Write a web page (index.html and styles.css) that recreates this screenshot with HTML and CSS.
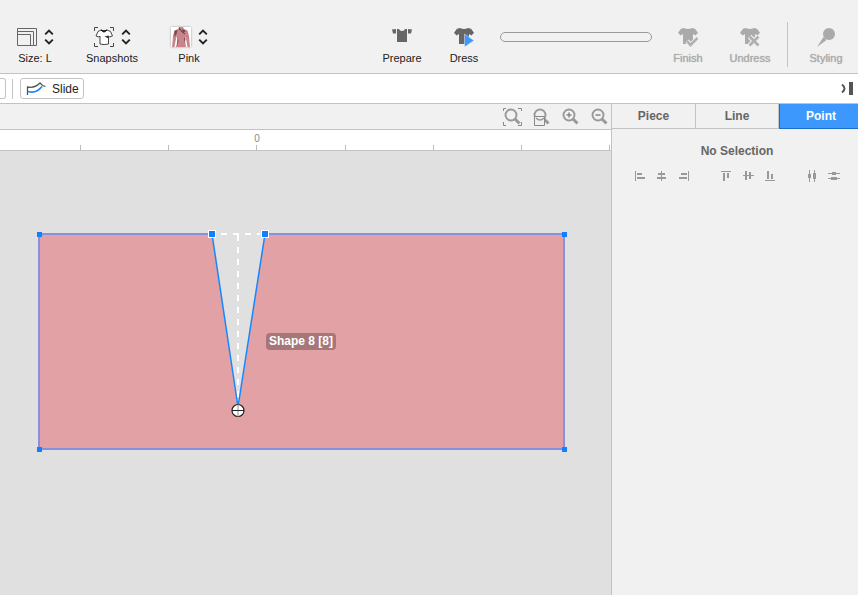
FILE: index.html
```html
<!DOCTYPE html>
<html lang="en">
<head>
<meta charset="utf-8">
<title>Pattern editor</title>
<link rel="stylesheet" href="styles.css">
</head>
<body>
<svg class="defs" aria-hidden="true">
  <symbol id="chevrons" viewBox="0 0 10 16"><path d="M1.200 5.300L5 1.500l3.800 3.800M1.200 10.700L5 14.500l3.800-3.800" fill="none" stroke="#222" stroke-width="1.900"/></symbol>
  <symbol id="tee" viewBox="0 0 20 20"><path d="M6 1q4 2 8 0l3 .8 3 4L17.500 8.500 15 7v10H5V7L2.500 8.500 0 5.800l3-4z" fill="currentColor"/></symbol>
  <symbol id="lens" viewBox="0 0 20 20"><circle cx="9" cy="8" r="5.500" fill="none" stroke="#999" stroke-width="1.900"/><path d="M13 12l4.500 4.500" stroke="#999" stroke-width="3"/></symbol>
</svg>
<header class="topbar">
  <div class="group presets">
    <button class="tool">
      <span class="icons">
        <svg width="20" height="20"><path d="M.5 1.500h19v17H.5zM.5 4.500h16v14M.5 7.500h13v11" fill="none" stroke="#666"/></svg>
        <svg width="10" height="16"><use href="#chevrons"/></svg>
      </span>Size: L
    </button>
    <button class="tool">
      <span class="icons">
        <svg width="20" height="20"><path d="M.5 4V.5H4M16 .5h3.500V4M19.500 16v3.500H16M4 19.500H.5V16" fill="none" stroke="#444"/><path d="M7 3L4 4.500 2 9l3 1 1-1v8q4 1.200 8.500 0V9l1 1 3-1-2-4.500L13 3Q10 5 7 3z" fill="#fff" stroke="#444"/><path d="M7 3q3 4 6 0l-3 1z" fill="#222" stroke="#222"/><path d="M10.500 9.500l4-1v3z" fill="#333"/></svg>
        <svg width="10" height="16"><use href="#chevrons"/></svg>
      </span>Snapshots
    </button>
    <button class="tool">
      <span class="icons">
        <svg class="thumb" width="20" height="20"><path d="M8 0h4l1 2 3.500 1.500L18 9l1 11h-2.500L14.500 9q-1 5 .5 11H5Q7 14 5.500 9L3.500 20H1L2 9l1.500-5.500L7 2z" fill="#ca858a"/><path d="M8 0v3l3 1M3.500 4l3-1-1 4-2 3zM6.500 14q1-3 0-5l1 5-2 6zM13 10l1.500 2-1 4zM11 2l4 2-3 2z" fill="#75464d"/><path d="M10 4l4 3" stroke="#623942"/></svg>
        <svg width="10" height="16"><use href="#chevrons"/></svg>
      </span>Pink
    </button>
  </div>
  <div class="group simulate">
    <button class="tool narrow">
      <span class="icons"><svg width="20" height="20"><path d="M5 2h2q.5 2 3 2t3-2h2v13H5zM0 2.500L4 2v4.500H1zM20 2.500L16 2v4.500h3z" fill="#666"/></svg></span>Prepare
    </button>
    <button class="tool narrow">
      <span class="icons dark"><svg width="20" height="20"><use href="#tee"/><path d="M10.500 7v13l9.500-6.500z" fill="#3c98fc" stroke="#f1f1f1" stroke-width=".5"/></svg></span>Dress
    </button>
  </div>
  <div class="progress" role="progressbar" aria-label="Simulation progress"></div>
  <div class="group finishing">
    <button class="tool narrow" disabled>
      <span class="icons"><svg width="20" height="20"><use href="#tee"/><path d="M9 14l3.500 4 7-7" fill="none" stroke="#f1f1f1" stroke-width="4.500"/><path d="M9 14l3.500 4 7-7" fill="none" stroke="#b0b0b0" stroke-width="2.600"/></svg></span>Finish
    </button>
    <button class="tool narrow" disabled>
      <span class="icons"><svg width="20" height="20"><use href="#tee"/><path d="M9.500 9.500l9 9m0-9l-9 9" stroke="#f1f1f1" stroke-width="5"/><path d="M9.500 9.500l9 9m0-9l-9 9" stroke="#b0b0b0" stroke-width="2.800"/></svg></span>Undress
    </button>
  </div>
  <div class="styling">
    <button class="tool narrow" disabled>
      <span class="icons"><svg width="20" height="20"><circle cx="13" cy="7" r="6" fill="currentColor"/><path d="M7.500 10l3 3L1 20z" fill="currentColor"/></svg></span>Styling
    </button>
  </div>
</header>
<nav class="optionbar">
  <button class="clipped" aria-label="Previous tool"></button>
  <span class="separator"></span>
  <button class="option"><svg width="21" height="16"><path d="M1.500 14V6q7 1.500 12.500-4l2.500 2.500 3 1" fill="none" stroke="#555" stroke-width="1.300"/><path d="M2 10.500q8 2.500 14-5" fill="none" stroke="#1686ff" stroke-width="1.700"/></svg>Slide</button>
  <button class="collapse" aria-label="Collapse panel"><svg width="12" height="13"><path d="M1 2.500q5 4 0 8" fill="none" stroke="#555" stroke-width="2"/><path d="M8 0h4v13H8z" fill="#555"/></svg></button>
</nav>
<main class="work">
  <section class="stage">
    <div class="zoombar">
      <button aria-label="Zoom to fit"><svg width="20" height="20"><use href="#lens"/><path d="M1.500 4V1.500H4M16 1.500h3.500V4M19.500 15v3.500H16M4 18.500H1.500V15" fill="none" stroke="#888"/></svg></button>
      <button aria-label="Zoom to area"><svg width="20" height="20"><use href="#lens"/><path d="M3.500 9.500h10v9h-10z" fill="#f1f1f1" stroke="#888"/><path d="M5 11q4 4 8 0" fill="none" stroke="#999" stroke-width="1.500"/></svg></button>
      <button aria-label="Zoom in"><svg width="20" height="20"><use href="#lens"/><path d="M6.500 8h5M9 5.500v5" stroke="#888" stroke-width="1.500"/></svg></button>
      <button aria-label="Zoom out"><svg width="20" height="20"><use href="#lens"/><path d="M6.500 8h5" stroke="#888" stroke-width="1.500"/></svg></button>
    </div>
    <svg class="ruler"><path d="M80.500 15v5M168.500 15v5M256.500 15v5M345.500 15v5M433.500 15v5M521.500 15v5M609.500 15v5" stroke="#bbb"/><text x="257" y="12" text-anchor="middle">0</text></svg>
    <div class="canvas">
      <svg class="pattern">
        <path d="M39 83H212L238 259 265 83H564V298H39z" fill="#e2a2a5"/>
        <path d="M212 83H39V298H564V83H265" fill="none" stroke="#8790dd" stroke-width="2"/>
        <path d="M212 83L238 256 265 83" fill="none" stroke="#1686ff" stroke-width="1.500"/>
        <path d="M221 83H260M238 84V250" stroke="#fff" stroke-width="2" stroke-dasharray="6 6"/>
        <path d="M37 81h5v5h-5zM562 81h5v5h-5zM37 296h5v5h-5zM562 296h5v5h-5z" fill="#1080ff"/>
        <path d="M208 79h8v8h-8zM261 79h8v8h-8z" fill="#fff"/>
        <path d="M209 80h6v6h-6zM262 80h6v6h-6z" fill="#1080ff"/>
        <circle cx="238" cy="259.500" r="6" fill="#fff" stroke="#222" stroke-width="1.200"/>
        <path d="M238 253.500v12" stroke="#999"/>
        <path d="M232 259.500h12" stroke="#222"/>
      </svg>
      <span class="shape-label">Shape 8 [8]</span>
    </div>
  </section>
  <aside class="panel">
    <div class="panel-body">
      <div class="tabs" role="tablist">
        <button role="tab">Piece</button>
        <button role="tab">Line</button>
        <button role="tab" class="active" aria-selected="true">Point</button>
      </div>
      <h2>No Selection</h2>
      <div class="align">
        <div class="set">
          <button aria-label="Align left"><svg width="12" height="12"><path d="M1.500 1v10" stroke="#999"/><path d="M3 3h5v2H3zM3 7h8v2H3z"/></svg></button>
          <button aria-label="Align center"><svg width="12" height="12"><path d="M5.500 1v10" stroke="#999"/><path d="M2 3h7v2H2zM1 7h9v2H1z"/></svg></button>
          <button aria-label="Align right"><svg width="12" height="12"><path d="M10.500 1v10" stroke="#999"/><path d="M3 3h6v2H3zM1 7h8v2H1z"/></svg></button>
        </div>
        <div class="set">
          <button aria-label="Align top"><svg width="12" height="12"><path d="M1 1.500h10" stroke="#999"/><path d="M3 3h2v8H3zM7 3h2v5H7z"/></svg></button>
          <button aria-label="Align middle"><svg width="12" height="12"><path d="M1 5.500h11" stroke="#999"/><path d="M3 1h2v9H3zM7 2h2v7H7z"/></svg></button>
          <button aria-label="Align bottom"><svg width="12" height="12"><path d="M1 10.500h10" stroke="#999"/><path d="M3 1h2v8H3zM7 4h2v5H7z"/></svg></button>
        </div>
        <div class="set">
          <button aria-label="Distribute horizontally"><svg width="12" height="12"><path d="M3.500 0v12M8.500 0v12" stroke="#999"/><path d="M2 4h3v4H2zM7 3h3v6H7z"/></svg></button>
          <button aria-label="Distribute vertically"><svg width="12" height="12"><path d="M0 3.500h12M0 8.500h12" stroke="#999"/><path d="M4 2h4v3H4zM3 7h6v3H3z"/></svg></button>
        </div>
      </div>
    </div>
  </aside>
</main>
</body>
</html>
```
FILE: styles.css
```css
* { box-sizing: border-box; }
body {
  margin: 0;
  min-height: 100vh;
  display: flex;
  flex-direction: column;
  background: #f1f1f1;
  color: #222;
  font-family: "Liberation Sans", Arial, sans-serif;
  font-size: 12px;
  overflow: hidden;
}
button {
  border: 0;
  padding: 0;
  background: none;
  color: inherit;
  font: inherit;
}
svg { display: block; flex: none; }
.defs { position: absolute; width: 0; height: 0; }

.topbar {
  display: flex;
  height: 74px;
  padding: 22px 12px 0 9px;
  border-bottom: 1px solid #c3c3c3;
}
.group { display: flex; }
.presets { gap: 25px; }
.simulate { gap: 22px; margin-left: auto; }
.finishing { gap: 20px; margin-left: 15px; }
.tool {
  display: flex;
  flex-direction: column;
  align-items: center;
  gap: 2px;
  width: 52px;
  height: 45px;
  padding-top: 4px;
  font-size: 11px;
  line-height: 16px;
  white-space: nowrap;
}
.tool.narrow { width: 40px; }
.finishing .tool.narrow { width: 42px; }
.tool:disabled { color: #aaa; text-shadow: 0 0 1px #aaa; }
.icons {
  display: flex;
  align-items: center;
  gap: 7px;
  height: 22px;
}
.dark { color: #666; }
.thumb { background: #fff; box-shadow: 0 0 2px #999; }
.progress {
  width: 152px;
  height: 10px;
  margin: 10px 0 0 16px;
  border: 1px solid #999;
  border-radius: 5px;
}
.styling {
  margin-left: 16px;
  padding-left: 18px;
  border-left: 1px solid #c3c3c3;
  height: 45px;
}

.optionbar {
  display: flex;
  align-items: center;
  height: 30px;
  padding-right: 5px;
  background: #fff;
  border-bottom: 1px solid #c3c3c3;
}
.clipped, .option {
  height: 21px;
  border: 1px solid #c3c3c3;
  border-radius: 3px;
}
.clipped { width: 6px; border-left: 0; border-radius: 0 3px 3px 0; }
.separator { width: 1px; height: 20px; margin: 0 7px 0 6px; background: #c3c3c3; }
.option {
  display: flex;
  align-items: center;
  gap: 5px;
  padding: 0 4px 0 5px;
}
.collapse { margin-left: auto; }

.work { flex: 1; display: flex; }
.stage {
  flex: 1;
  min-width: 0;
  display: flex;
  flex-direction: column;
}
.zoombar {
  display: flex;
  justify-content: flex-end;
  align-items: center;
  gap: 9px;
  height: 26px;
  padding-right: 2px;
  border-bottom: 1px solid #c3c3c3;
}
.ruler {
  width: 100%;
  height: 21px;
  background: #fff;
  border-bottom: 1px solid #c3c3c3;
}
.ruler text { font-size: 10px; fill: #888; }
.canvas { position: relative; flex: 1; background: #e0e0e0; }
.pattern { width: 100%; height: 100%; }
.shape-label {
  position: absolute;
  left: 266px;
  top: 182px;
  padding: 0 3px;
  border-radius: 4px;
  background: #a67779;
  color: #fff;
  font-weight: bold;
  line-height: 17px;
}

.panel { flex: 0 0 247px; border-left: 1px solid #c3c3c3; }
.panel-body { margin-right: -4px; color: #666; }
.tabs { display: grid; grid-template-columns: 84px 83px 83px; }
.tabs button {
  height: 25px;
  border-right: 1px solid #c3c3c3;
  border-bottom: 1px solid #c3c3c3;
  font-weight: bold;
}
.tabs .active {
  background: #3c98fc;
  color: #fff;
  border: 0 solid #1b6fcc;
  border-width: 0 0 1px 1px;
}
.panel h2 {
  margin: 14px 0 0;
  font-size: 12px;
  line-height: 16px;
  text-align: center;
}
.align { display: flex; justify-content: center; gap: 20px; margin-top: 11px; }
.set { display: flex; }
.set button { display: grid; place-items: center; width: 22px; height: 12px; }
.set svg { fill: #999; }
```
